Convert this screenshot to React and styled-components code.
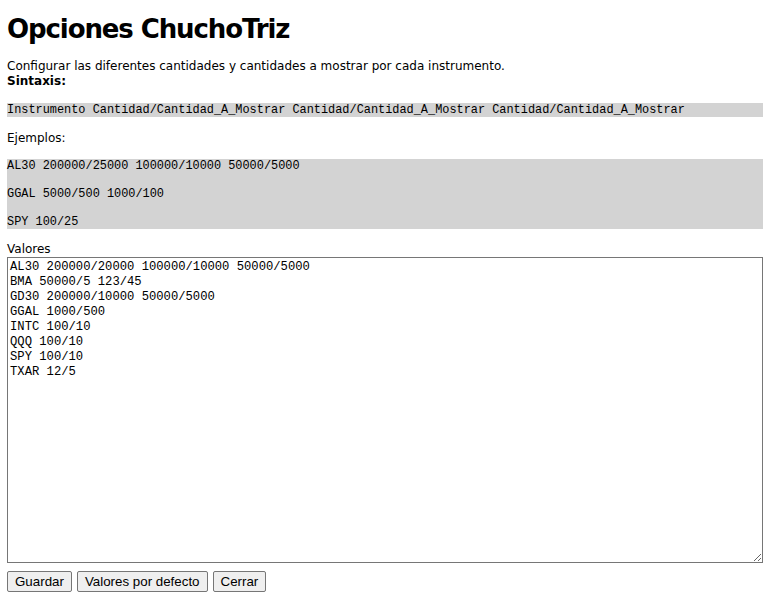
import React from "react";
import styled, { createGlobalStyle } from "styled-components";

const Global = createGlobalStyle`
  html, body { margin: 0; padding: 0; background: #fff; }
  body {
    padding: 0 3px 0 7px;
    font-family: "DejaVu Sans", Verdana, sans-serif;
    font-size: 12px;
    color: #000;
  }
`;

const Page = styled.div`
  display: flex;
  flex-direction: column;
`;

const Title = styled.h1`
  margin: 14px 0 0 0;
  font-family: "DejaVu Sans", Verdana, sans-serif;
  font-weight: bold;
  font-size: 26px;
  line-height: 30px;
  letter-spacing: -1.1px;
`;

const Text = styled.p`
  margin: ${(p) => p.$mt || 0}px 0 0 0;
  line-height: 15px;
  font-size: 12px;
  letter-spacing: 0;
`;

const Code = styled.pre`
  margin: ${(p) => p.$mt || 0}px 0 0 0;
  background: #d3d3d3;
  font-family: "Liberation Mono", "DejaVu Sans Mono", monospace;
  font-size: 11.9px;
  line-height: 14px;
  white-space: pre;
  color: #000;
`;

const Label = styled.label`
  display: block;
  margin-top: 13px;
  line-height: 15px;
  font-size: 12px;
`;

const Area = styled.textarea`
  display: block;
  box-sizing: border-box;
  width: 100%;
  height: 306px;
  margin: 0;
  padding: 2px;
  border: 1px solid #767676;
  font-family: "Liberation Mono", "DejaVu Sans Mono", monospace;
  font-size: 12.2px;
  line-height: 15px;
  resize: both;
  color: #000;
`;

const Buttons = styled.div`
  display: flex;
  gap: 5px;
  margin-top: 8px;
`;

const Button = styled.button`
  font-family: "Liberation Sans", Arial, sans-serif;
  font-size: 13.33px;
  height: 21px;
  padding: 0 7px;
  background: #efefef;
  border: 1px solid #767676;
  border-radius: 2px;
  color: #000;
`;

const valores = `AL30 200000/20000 100000/10000 50000/5000
BMA 50000/5 123/45
GD30 200000/10000 50000/5000
GGAL 1000/500
INTC 100/10
QQQ 100/10
SPY 100/10
TXAR 12/5`;

export default function App() {
  return (
    <Page>
      <Global />
      <Title>Opciones ChuchoTriz</Title>
      <Text $mt={15}>
        Configurar las diferentes cantidades y cantidades a mostrar por cada instrumento.
        <br />
        <b>Sintaxis:</b>
      </Text>
      <Code $mt={14}>
        Instrumento Cantidad/Cantidad_A_Mostrar Cantidad/Cantidad_A_Mostrar Cantidad/Cantidad_A_Mostrar
      </Code>
      <Text $mt={14}>Ejemplos:</Text>
      <Code $mt={13}>{`AL30 200000/25000 100000/10000 50000/5000

GGAL 5000/500 1000/100

SPY 100/25`}</Code>
      <Label htmlFor="valores">Valores</Label>
      <Area id="valores" defaultValue={valores} spellCheck={false} />
      <Buttons>
        <Button>Guardar</Button>
        <Button>Valores por defecto</Button>
        <Button>Cerrar</Button>
      </Buttons>
    </Page>
  );
}
